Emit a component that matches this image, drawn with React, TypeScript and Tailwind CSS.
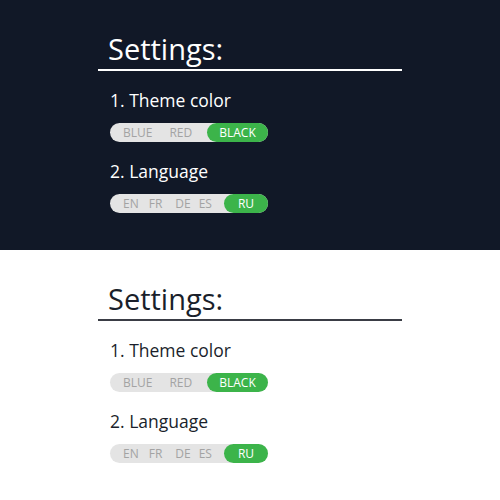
const Toggle = ({ items, active }: { items: { label: string; left: string }[]; active: { label: string; width: string } }) => (
  <div className="flex h-[19px] w-[158px] items-center rounded-full bg-[#e4e4e4] text-[12px] leading-none">
    {items.map((it) => (
      <span key={it.label} className={`${it.left} text-[#a3a3a3]`}>
        {it.label}
      </span>
    ))}
    <span className={`ml-auto flex h-full ${active.width} items-center justify-center rounded-full bg-[#3cb44a] text-white`}>
      {active.label}
    </span>
  </div>
);

const Panel = ({ dark }: { dark: boolean }) => (
  <div className={`h-[250px] pl-[98px] pt-[33px] ${dark ? 'bg-[#111827] text-white' : 'bg-white text-[#1a1f2b]'}`}>
    <div className={`w-[304px] border-b-2 pb-[4px] pl-[10px] ${dark ? 'border-white' : 'border-[#3a3d45]'}`}>
      <h1 className="text-[29px] leading-[32px]">Settings:</h1>
    </div>
    <div className="pl-[12px]">
      <p className="mt-[18px] text-[17.5px] leading-[22px]">1. Theme color</p>
      <div className="mt-[12px]">
        <Toggle
          items={[
            { label: 'BLUE', left: 'ml-[13px]' },
            { label: 'RED', left: 'ml-[17px]' },
          ]}
          active={{ label: 'BLACK', width: 'w-[61px]' }}
        />
      </div>
      <p className="mt-[18px] text-[17.5px] leading-[22px]">2. Language</p>
      <div className="mt-[12px]">
        <Toggle
          items={[
            { label: 'EN', left: 'ml-[13px]' },
            { label: 'FR', left: 'ml-[10px]' },
            { label: 'DE', left: 'ml-[13px]' },
            { label: 'ES', left: 'ml-[8px]' },
          ]}
          active={{ label: 'RU', width: 'w-[44px]' }}
        />
      </div>
    </div>
  </div>
);

export default function App() {
  return (
    <div className="w-[500px] font-['Open_Sans',sans-serif]">
      <Panel dark />
      <Panel dark={false} />
    </div>
  );
}
